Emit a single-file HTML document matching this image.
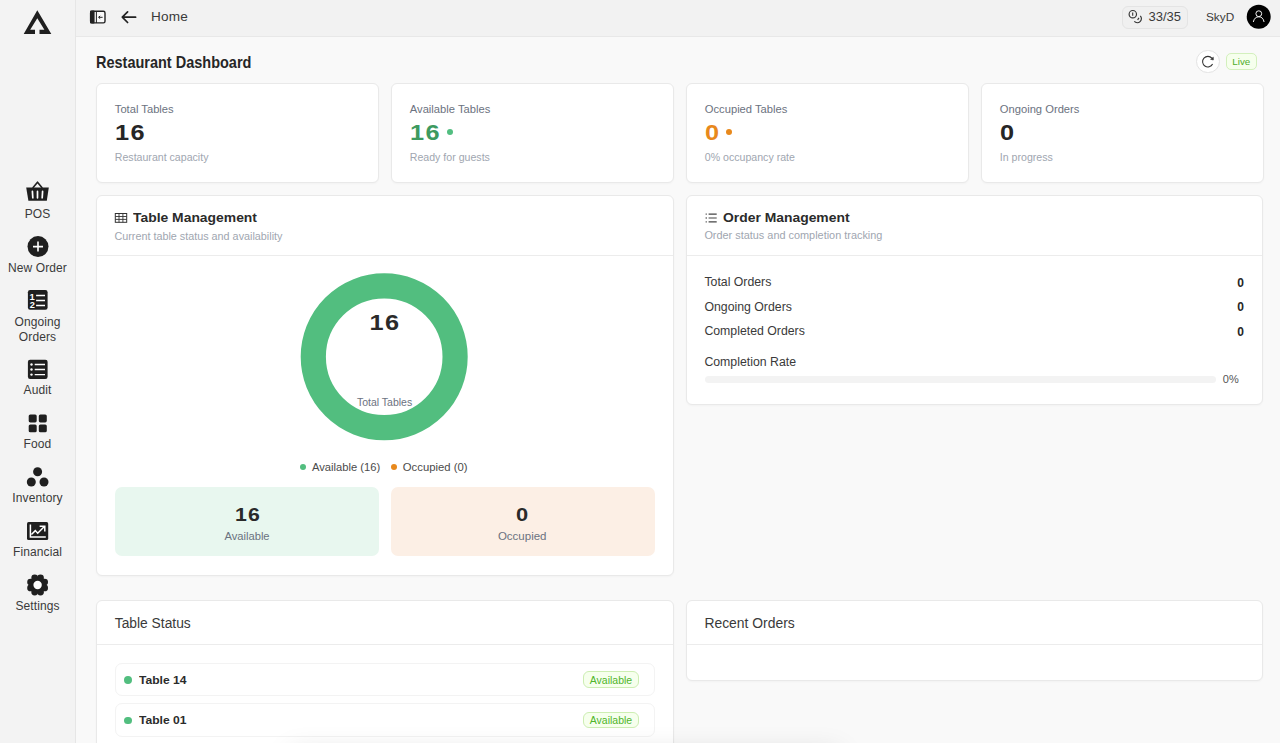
<!DOCTYPE html>
<html><head><meta charset="utf-8"><title>Restaurant Dashboard</title>
<style>
html,body{margin:0;padding:0;}
body{width:1280px;height:743px;overflow:hidden;position:relative;font-family:"Liberation Sans",sans-serif;background:#f9f9f9;}
.b{position:absolute;}
.t{position:absolute;line-height:1;white-space:nowrap;}
</style></head><body>
<div class="b" style="left:0px;top:0px;width:1280px;height:743px;background:#f9f9f9;"></div>
<div class="b" style="left:0px;top:0px;width:75px;height:743px;background:#f3f3f3;"></div>
<div class="b" style="left:75px;top:0px;width:1px;height:743px;background:#e6e6e6;"></div>
<div class="b" style="left:76px;top:0px;width:1204px;height:36px;background:#f2f2f2;"></div>
<div class="b" style="left:76px;top:36px;width:1204px;height:1px;background:#e8e8e8;"></div>
<svg class="b" style="left:0;top:0" width="75" height="40" viewBox="0 0 75 40"><path d="M35 33.9 L23.7 33.9 L37.3 10.2 L51.3 33.9 L39.5 33.9 L39.5 29.8 L44.4 29.8 L37.3 18.2 L30.2 29.8 L35 29.8 Z" fill="#1f1f1f"/></svg>
<svg class="b" style="left:0;top:170px" width="75" height="450" viewBox="0 170 75 450">
<g fill="#1f1f1f">
<path d="M32.7 188 L37.5 182.2 L42.3 188" fill="none" stroke="#1f1f1f" stroke-width="1.6" stroke-linejoin="round"/>
<path d="M26.2 187.4 H48.8 L46.8 200.8 H28.4 Z"/>
<path d="M32.4 191.4 L32.8 197.8 M37.5 191.4 V197.8 M42.6 191.4 L42.2 197.8" stroke="#fff" stroke-width="1.7" stroke-linecap="round"/>
<circle cx="38" cy="246.6" r="10.5"/>
<path d="M38 241.6 V251.6 M33 246.6 H43" stroke="#fff" stroke-width="1.6"/>
<rect x="27.9" y="290.1" width="19.7" height="19.7" rx="2.2"/>
<rect x="27.9" y="359.7" width="19.7" height="19.2" rx="2.2"/>
<rect x="28.7" y="414.5" width="8" height="7.9" rx="1.6"/>
<rect x="38.8" y="414.5" width="8" height="7.9" rx="1.6"/>
<rect x="28.7" y="424.5" width="8" height="7.8" rx="1.6"/>
<rect x="38.8" y="424.5" width="8" height="7.8" rx="1.6"/>
<circle cx="37.6" cy="471.8" r="4.5"/>
<circle cx="31.3" cy="482" r="4.5"/>
<circle cx="44" cy="482" r="4.5"/>
<rect x="27" y="522.1" width="21.2" height="17.9" rx="1.6"/>
<g transform="translate(37.6 585)">
<circle r="7.8"/>
<circle cx="2.91" cy="-7.02" r="3.4"/><circle cx="7.02" cy="-2.91" r="3.4"/><circle cx="7.02" cy="2.91" r="3.4"/><circle cx="2.91" cy="7.02" r="3.4"/><circle cx="-2.91" cy="7.02" r="3.4"/><circle cx="-7.02" cy="2.91" r="3.4"/><circle cx="-7.02" cy="-2.91" r="3.4"/><circle cx="-2.91" cy="-7.02" r="3.4"/>
<circle r="4.2" fill="#fff"/>
</g>
</g>
<g stroke="#fff" fill="none">
<path d="M36.1 295.5 H45 M36.1 300.5 H45 M36.1 305.5 H45" stroke-width="1.4"/>
<text x="32.2" y="299.7" font-family="Liberation Sans" font-weight="700" font-size="9.4" fill="#fff" stroke="none" text-anchor="middle">1</text>
<text x="32.2" y="307.6" font-family="Liberation Sans" font-weight="700" font-size="9.2" fill="#fff" stroke="none" text-anchor="middle">2</text>
<path d="M34.7 364.5 H45 M34.7 369.5 H45 M34.7 374.6 H45" stroke-width="1.4"/>
<circle cx="31.5" cy="364.5" r="1.2" fill="#fff" stroke="none"/><circle cx="31.5" cy="369.5" r="1.2" fill="#fff" stroke="none"/><circle cx="31.5" cy="374.6" r="1.2" fill="#fff" stroke="none"/>
<path d="M30.4 524.6 V537 H45.8" stroke-width="1.5"/>
<path d="M31.4 534.5 L35.3 530.6 L37.7 533.2 L44.6 526.3 M39.6 526.2 H44.8 V531.4" stroke-width="1.5"/>
</g>
</svg>
<div class="t" style="top:207.84px;font-size:12px;font-weight:400;color:#3a3a3a;letter-spacing:0.1px;left:-162.50px;width:400px;text-align:center;">POS</div>
<div class="t" style="top:262.04px;font-size:12px;font-weight:400;color:#3a3a3a;letter-spacing:0.1px;left:-162.50px;width:400px;text-align:center;">New Order</div>
<div class="t" style="top:316.04px;font-size:12px;font-weight:400;color:#3a3a3a;letter-spacing:0.1px;left:-162.50px;width:400px;text-align:center;">Ongoing</div>
<div class="t" style="top:331.04px;font-size:12px;font-weight:400;color:#3a3a3a;letter-spacing:0.1px;left:-162.50px;width:400px;text-align:center;">Orders</div>
<div class="t" style="top:384.34px;font-size:12px;font-weight:400;color:#3a3a3a;letter-spacing:0.1px;left:-162.50px;width:400px;text-align:center;">Audit</div>
<div class="t" style="top:438.44px;font-size:12px;font-weight:400;color:#3a3a3a;letter-spacing:0.1px;left:-162.50px;width:400px;text-align:center;">Food</div>
<div class="t" style="top:492.44px;font-size:12px;font-weight:400;color:#3a3a3a;letter-spacing:0.1px;left:-162.50px;width:400px;text-align:center;">Inventory</div>
<div class="t" style="top:546.44px;font-size:12px;font-weight:400;color:#3a3a3a;letter-spacing:0.1px;left:-162.50px;width:400px;text-align:center;">Financial</div>
<div class="t" style="top:600.44px;font-size:12px;font-weight:400;color:#3a3a3a;letter-spacing:0.1px;left:-162.50px;width:400px;text-align:center;">Settings</div>
<svg class="b" style="left:80px;top:0" width="70" height="36" viewBox="80 0 70 36">
<rect x="90.6" y="11.3" width="14.4" height="11.6" rx="1.6" fill="#fafafa" stroke="#222" stroke-width="1.4"/>
<rect x="90" y="10.6" width="4.6" height="12.9" rx="1" fill="#222"/>
<path d="M96.4 11 V23" stroke="#222" stroke-width="1"/>
<path d="M102.6 17.3 H98.8 M100.2 15.9 L98.6 17.3 L100.2 18.7" stroke="#222" stroke-width="1" fill="none"/>
<path d="M135.6 17.2 H122.6 M127.6 11.9 L122.3 17.2 L127.6 22.5" stroke="#222" stroke-width="1.7" fill="none" stroke-linecap="round" stroke-linejoin="round"/>
</svg>
<div class="t" style="top:10.09px;font-size:13.6px;font-weight:400;color:#3a3a3a;letter-spacing:0.15px;left:151.00px;">Home</div>
<div class="b" style="left:1122px;top:5.5px;width:66px;height:23.0px;background:#f0f0f0;border:1px solid #e4e4e4;border-radius:6px;box-sizing:border-box;"></div>
<svg class="b" style="left:1120px;top:0" width="30" height="36" viewBox="1120 0 30 36">
<circle cx="1132.8" cy="14.2" r="3.7" fill="none" stroke="#333" stroke-width="1.15"/>
<path d="M1132.7 12.6 V15.8" stroke="#333" stroke-width="1.1"/>
<path d="M1140.3 15.8 A4 4 0 1 1 1134.3 21.4" fill="none" stroke="#333" stroke-width="1.15"/>
<path d="M1139 17.9 L1137.6 19.9" stroke="#333" stroke-width="1.1"/>
</svg>
<div class="t" style="top:10.20px;font-size:13px;font-weight:400;color:#3a3a3a;left:1148.50px;">33/35</div>
<div class="t" style="top:11.61px;font-size:11.8px;font-weight:400;color:#3a3a3a;left:1206.00px;">SkyD</div>
<svg class="b" style="left:1240px;top:0" width="40" height="36" viewBox="1240 0 40 36">
<circle cx="1258.7" cy="16.7" r="12" fill="#000"/>
<circle cx="1258.8" cy="13.7" r="2.9" fill="none" stroke="#fff" stroke-width="0.95"/>
<path d="M1253.4 21.6 Q1254.5 16.8 1258.8 16.8 Q1263.1 16.8 1264 21.6" fill="none" stroke="#fff" stroke-width="0.95" stroke-linecap="round"/>
</svg>
<div class="t" style="top:53.60px;font-size:16.3px;font-weight:700;color:#262626;left:96.00px;transform:scaleX(0.89);transform-origin:0 0;">Restaurant Dashboard</div>
<div class="b" style="left:1196px;top:49.5px;width:23.5px;height:23.5px;background:#fff;border:1px solid #e3e3e3;border-radius:50%;box-sizing:border-box;"></div>
<svg class="b" style="left:1190px;top:45px" width="30" height="30" viewBox="1190 45 30 30">
<path d="M1211.9 58.2 A5.3 5.3 0 1 0 1212.6 64.1" fill="none" stroke="#333" stroke-width="1.05"/>
<path d="M1213.3 57.2 L1213.3 60 L1210.6 59.3 Z" fill="#333" stroke="#333" stroke-width="0.6" stroke-linejoin="round"/>
</svg>
<div class="b" style="left:1226px;top:53px;width:30.5px;height:16.5px;background:#f6ffed;border:1px solid #d3f0bd;border-radius:5px;box-sizing:border-box;"></div>
<div class="t" style="top:56.80px;font-size:9.8px;font-weight:400;color:#4fae2b;left:1041.30px;width:400px;text-align:center;">Live</div>
<div class="b" style="left:96px;top:83px;width:282.5px;height:100px;background:#fff;border:1px solid #e9e9e9;border-radius:6px;box-sizing:border-box;box-shadow:0 1px 2px rgba(0,0,0,0.03);"></div>
<div class="t" style="top:104.42px;font-size:11.2px;font-weight:400;color:#6b7280;left:114.80px;">Total Tables</div>
<div class="t" style="top:121.98px;font-size:22px;font-weight:700;color:#262626;letter-spacing:1.2px;left:115.00px;transform:scaleX(1.15);transform-origin:0 0;">16</div>
<div class="t" style="top:152.23px;font-size:10.6px;font-weight:400;color:#a0a6b0;left:114.80px;">Restaurant capacity</div>
<div class="b" style="left:391px;top:83px;width:282.5px;height:100px;background:#fff;border:1px solid #e9e9e9;border-radius:6px;box-sizing:border-box;box-shadow:0 1px 2px rgba(0,0,0,0.03);"></div>
<div class="t" style="top:104.42px;font-size:11.2px;font-weight:400;color:#6b7280;left:409.80px;">Available Tables</div>
<div class="t" style="top:121.98px;font-size:22px;font-weight:700;color:#3d9a5f;letter-spacing:1.2px;left:410.00px;transform:scaleX(1.15);transform-origin:0 0;">16</div>
<div class="b" style="left:446.59999999999997px;top:128.6px;width:6.0px;height:6.0px;background:#52be80;border-radius:50%;"></div>
<div class="t" style="top:152.23px;font-size:10.6px;font-weight:400;color:#a0a6b0;left:409.80px;">Ready for guests</div>
<div class="b" style="left:686px;top:83px;width:282.5px;height:100px;background:#fff;border:1px solid #e9e9e9;border-radius:6px;box-sizing:border-box;box-shadow:0 1px 2px rgba(0,0,0,0.03);"></div>
<div class="t" style="top:104.42px;font-size:11.2px;font-weight:400;color:#6b7280;left:704.80px;">Occupied Tables</div>
<div class="t" style="top:121.98px;font-size:22px;font-weight:700;color:#e8891c;letter-spacing:1.2px;left:705.00px;transform:scaleX(1.15);transform-origin:0 0;">0</div>
<div class="b" style="left:725.6px;top:128.6px;width:6.0px;height:6.0px;background:#e8891c;border-radius:50%;"></div>
<div class="t" style="top:152.23px;font-size:10.6px;font-weight:400;color:#a0a6b0;left:704.80px;">0% occupancy rate</div>
<div class="b" style="left:981px;top:83px;width:282.5px;height:100px;background:#fff;border:1px solid #e9e9e9;border-radius:6px;box-sizing:border-box;box-shadow:0 1px 2px rgba(0,0,0,0.03);"></div>
<div class="t" style="top:104.42px;font-size:11.2px;font-weight:400;color:#6b7280;left:999.80px;">Ongoing Orders</div>
<div class="t" style="top:121.98px;font-size:22px;font-weight:700;color:#262626;letter-spacing:1.2px;left:1000.00px;transform:scaleX(1.15);transform-origin:0 0;">0</div>
<div class="t" style="top:152.23px;font-size:10.6px;font-weight:400;color:#a0a6b0;left:999.80px;">In progress</div>
<div class="b" style="left:96px;top:195px;width:577.5px;height:380.5px;background:#fff;border:1px solid #e9e9e9;border-radius:6px;box-sizing:border-box;box-shadow:0 1px 2px rgba(0,0,0,0.03);"></div>
<svg class="b" style="left:110px;top:208px" width="22" height="20" viewBox="110 208 22 20">
<rect x="115.3" y="213.5" width="11.4" height="8.8" fill="none" stroke="#333" stroke-width="1"/>
<path d="M119 213.5 V222.3 M122.9 213.5 V222.3 M115.3 216.5 H126.7 M115.3 219.4 H126.7" stroke="#333" stroke-width="0.9"/>
</svg>
<div class="t" style="top:212.16px;font-size:12.8px;font-weight:700;color:#2b2b2b;left:133.00px;transform:scaleX(1.085);transform-origin:0 0;">Table Management</div>
<div class="t" style="top:230.96px;font-size:10.8px;font-weight:400;color:#a0a6b0;left:114.40px;">Current table status and availability</div>
<div class="b" style="left:97px;top:255px;width:576px;height:1px;background:#ececec;"></div>
<svg class="b" style="left:290px;top:262px" width="190" height="190" viewBox="290 262 190 190">
<circle cx="384.2" cy="356.8" r="70.9" fill="none" stroke="#52be7f" stroke-width="25.2"/>
</svg>
<div class="t" style="top:311.58px;font-size:22px;font-weight:700;color:#2a2a2a;letter-spacing:1.2px;left:185.40px;width:400px;text-align:center;transform:scaleX(1.15);">16</div>
<div class="t" style="top:397.01px;font-size:10.5px;font-weight:400;color:#6b7280;left:184.60px;width:400px;text-align:center;">Total Tables</div>
<div class="b" style="left:300px;top:464px;width:6px;height:6px;background:#52be7f;border-radius:50%;"></div>
<div class="t" style="top:461.92px;font-size:11.2px;font-weight:400;color:#4b4b4b;left:312.00px;">Available (16)</div>
<div class="b" style="left:391.2px;top:464px;width:6.0px;height:6px;background:#e8891c;border-radius:50%;"></div>
<div class="t" style="top:461.83px;font-size:11.3px;font-weight:400;color:#4b4b4b;left:402.80px;">Occupied (0)</div>
<div class="b" style="left:114.5px;top:487px;width:264.0px;height:69.20000000000005px;background:#e8f7ef;border-radius:7px;"></div>
<div class="b" style="left:391px;top:487px;width:263.5px;height:69.20000000000005px;background:#fcefe5;border-radius:7px;"></div>
<div class="t" style="top:504.82px;font-size:19px;font-weight:700;color:#2a2a2a;letter-spacing:1px;left:47.80px;width:400px;text-align:center;transform:scaleX(1.12);">16</div>
<div class="t" style="top:531.32px;font-size:11.2px;font-weight:400;color:#6b7280;left:47.00px;width:400px;text-align:center;">Available</div>
<div class="t" style="top:504.82px;font-size:19px;font-weight:700;color:#2a2a2a;left:322.30px;width:400px;text-align:center;transform:scaleX(1.15);">0</div>
<div class="t" style="top:531.07px;font-size:11.5px;font-weight:400;color:#6b7280;left:322.20px;width:400px;text-align:center;">Occupied</div>
<div class="b" style="left:686px;top:195px;width:577px;height:209.5px;background:#fff;border:1px solid #e9e9e9;border-radius:6px;box-sizing:border-box;box-shadow:0 1px 2px rgba(0,0,0,0.03);"></div>
<svg class="b" style="left:700px;top:208px" width="22" height="20" viewBox="700 208 22 20">
<path d="M708.6 214.1 H716.7 M708.6 218 H716.7 M708.6 221.9 H716.7" stroke="#444" stroke-width="1.15"/>
<path d="M706.2 213.4 V214.8 M706.2 217.3 V218.7 M706.2 221.2 V222.6" stroke="#444" stroke-width="1.1"/>
</svg>
<div class="t" style="top:212.36px;font-size:12.8px;font-weight:700;color:#2b2b2b;left:722.80px;transform:scaleX(1.085);transform-origin:0 0;">Order Management</div>
<div class="t" style="top:230.37px;font-size:10.9px;font-weight:400;color:#a0a6b0;left:704.40px;">Order status and completion tracking</div>
<div class="b" style="left:687px;top:255px;width:575px;height:1px;background:#ececec;"></div>
<div class="t" style="top:276.39px;font-size:12.3px;font-weight:400;color:#3a3a3a;left:704.40px;">Total Orders</div>
<div class="t" style="top:277.24px;font-size:12px;font-weight:700;color:#262626;left:844.00px;width:400px;text-align:right;">0</div>
<div class="t" style="top:300.59px;font-size:12.3px;font-weight:400;color:#3a3a3a;left:704.40px;">Ongoing Orders</div>
<div class="t" style="top:301.44px;font-size:12px;font-weight:700;color:#262626;left:844.00px;width:400px;text-align:right;">0</div>
<div class="t" style="top:324.79px;font-size:12.3px;font-weight:400;color:#3a3a3a;left:704.40px;">Completed Orders</div>
<div class="t" style="top:325.64px;font-size:12px;font-weight:700;color:#262626;left:844.00px;width:400px;text-align:right;">0</div>
<div class="t" style="top:355.79px;font-size:12.3px;font-weight:400;color:#3a3a3a;left:704.40px;">Completion Rate</div>
<div class="b" style="left:704.8px;top:375.5px;width:511.5px;height:7.5px;background:#f3f3f3;border-radius:4px;"></div>
<div class="t" style="top:374.49px;font-size:11px;font-weight:400;color:#555;left:1222.80px;">0%</div>
<div class="b" style="left:96px;top:600px;width:577.5px;height:160px;background:#fff;border:1px solid #e9e9e9;border-radius:6px;box-sizing:border-box;box-shadow:0 1px 2px rgba(0,0,0,0.03);"></div>
<div class="t" style="top:617.12px;font-size:13.8px;font-weight:400;color:#3a3a3a;left:114.80px;">Table Status</div>
<div class="b" style="left:97px;top:644px;width:576px;height:1px;background:#ececec;"></div>
<div class="b" style="left:115px;top:662.5px;width:539.5px;height:33.799999999999955px;background:#fff;border:1px solid #f3f3f3;border-radius:7px;box-sizing:border-box;"></div>
<div class="b" style="left:124.4px;top:676.2px;width:7.799999999999983px;height:7.7999999999999545px;background:#52be7f;border-radius:50%;"></div>
<div class="t" style="top:674.99px;font-size:11px;font-weight:700;color:#2b2b2b;left:138.60px;transform:scaleX(1.1);transform-origin:0 0;">Table 14</div>
<div class="b" style="left:583.2px;top:671.3px;width:55.59999999999991px;height:16.90000000000009px;background:#f6ffed;border:1px solid #cdeeb3;border-radius:6px;box-sizing:border-box;"></div>
<div class="t" style="top:675.01px;font-size:10.5px;font-weight:400;color:#4fb52a;left:411.00px;width:400px;text-align:center;">Available</div>
<div class="b" style="left:115px;top:702.8px;width:539.5px;height:33.799999999999955px;background:#fff;border:1px solid #f3f3f3;border-radius:7px;box-sizing:border-box;"></div>
<div class="b" style="left:124.4px;top:716.5px;width:7.799999999999983px;height:7.7999999999999545px;background:#52be7f;border-radius:50%;"></div>
<div class="t" style="top:715.29px;font-size:11px;font-weight:700;color:#2b2b2b;left:138.60px;transform:scaleX(1.1);transform-origin:0 0;">Table 01</div>
<div class="b" style="left:583.2px;top:711.5999999999999px;width:55.59999999999991px;height:16.90000000000009px;background:#f6ffed;border:1px solid #cdeeb3;border-radius:6px;box-sizing:border-box;"></div>
<div class="t" style="top:715.31px;font-size:10.5px;font-weight:400;color:#4fb52a;left:411.00px;width:400px;text-align:center;">Available</div>
<div class="b" style="left:686px;top:600px;width:577px;height:81px;background:#fff;border:1px solid #e9e9e9;border-radius:6px;box-sizing:border-box;box-shadow:0 1px 2px rgba(0,0,0,0.03);"></div>
<div class="t" style="top:616.73px;font-size:13.9px;font-weight:400;color:#3a3a3a;left:704.40px;">Recent Orders</div>
<div class="b" style="left:687px;top:644px;width:575px;height:1px;background:#ececec;"></div>
<div class="b" style="left:290px;top:752px;width:550px;height:48px;background:#fff;box-shadow:0 0 28px rgba(0,0,0,0.13);"></div>
</body></html>
